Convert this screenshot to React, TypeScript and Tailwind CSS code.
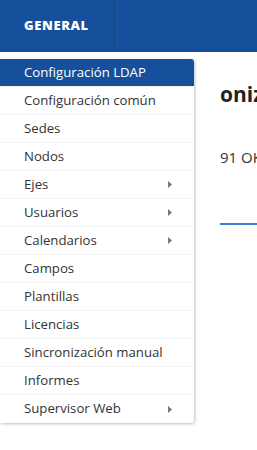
import { useState } from "react";

type MenuItem = {
  label: string;
  submenu?: boolean;
};

const items: MenuItem[] = [
  { label: "Configuración LDAP" },
  { label: "Configuración común" },
  { label: "Sedes" },
  { label: "Nodos" },
  { label: "Ejes", submenu: true },
  { label: "Usuarios", submenu: true },
  { label: "Calendarios", submenu: true },
  { label: "Campos" },
  { label: "Plantillas" },
  { label: "Licencias" },
  { label: "Sincronización manual" },
  { label: "Informes" },
  { label: "Supervisor Web", submenu: true },
];

function Caret() {
  return (
    <svg width="4" height="7" viewBox="0 0 4 7" className="fill-[#777]">
      <path d="M0 0 L4 3.5 L0 7 Z" />
    </svg>
  );
}

function GeneralMenu() {
  const [active, setActive] = useState<string>("Configuración LDAP");

  return (
    <div className="absolute left-0 top-[59px] z-10 w-[194px] overflow-hidden rounded-r-[3px] bg-white shadow-[1px_1px_3px_rgba(0,0,0,0.25)]">
      {items.map((item) => (
        <button
          key={item.label}
          type="button"
          onMouseEnter={() => setActive(item.label)}
          className={`flex h-[28px] w-full items-center justify-between border-b border-[#f3f3f3] pl-6 pr-[22px] text-left text-[13.2px] last:border-b-0 ${
            active === item.label
              ? "bg-[#164f9b] text-white"
              : "bg-white text-[#333]"
          }`}
        >
          <span>{item.label}</span>
          {item.submenu && <Caret />}
        </button>
      ))}
    </div>
  );
}

export default function App() {
  return (
    <div className="relative h-[450px] w-[257px] overflow-hidden bg-white font-['Open_Sans',sans-serif]">
      <header className="flex h-[52px] bg-[#164f9b]">
        <div className="flex w-[115px] items-center border-r border-[#154684] pl-6">
          <span className="text-[13px] font-extrabold tracking-[0.6px] text-white">
            GENERAL
          </span>
        </div>
      </header>

      <main className="pl-[220px] pt-[28px]">
        <h1 className="whitespace-nowrap text-[21px] font-bold leading-[28px] text-[#222]">
          oniz
        </h1>
        <p className="mt-[38px] whitespace-nowrap text-[15px] text-[#333]">
          91 OK
        </p>
        <div className="mt-[54px] h-[2px] w-full bg-[#3a7bd5]" />
      </main>

      <GeneralMenu />
    </div>
  );
}
